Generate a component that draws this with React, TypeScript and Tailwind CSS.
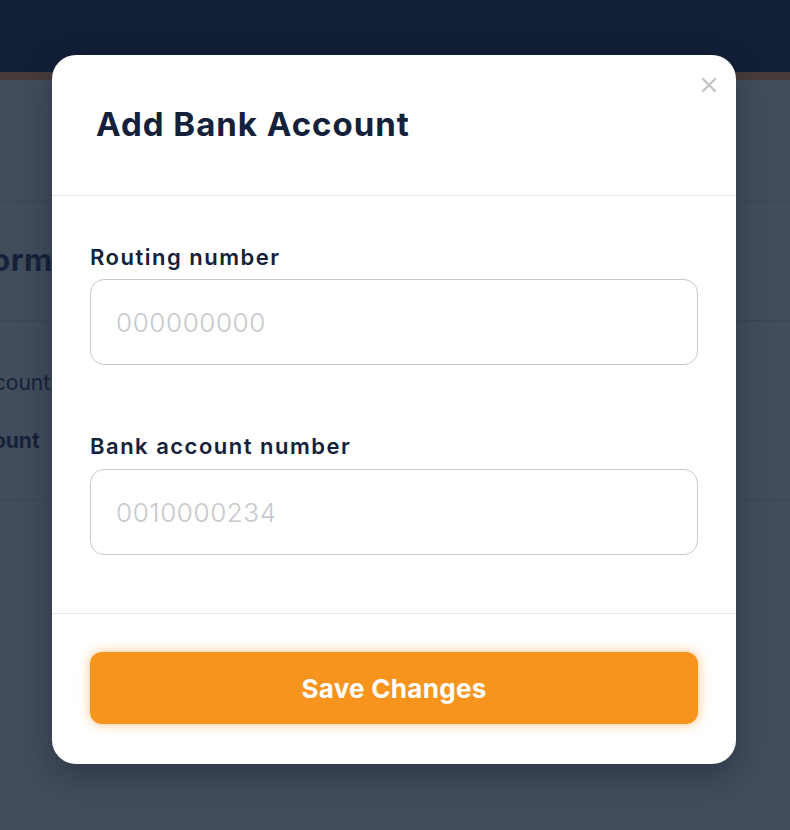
import React from "react";

const font = { fontFamily: "Inter, 'Open Sans', sans-serif" };

export default function App() {
  return (
    <div className="relative w-[790px] h-[830px] overflow-hidden bg-[#424d5c]" style={font}>
      {/* background page (under overlay) */}
      <div className="h-[72px] bg-[#111f37]" />
      <div className="h-[8px] bg-[#483c3b]" />
      <div className="h-[121px] border-b border-[#3d4755]" />
      <div className="h-[120px] border-b border-[#3c4654] flex items-center">
        <div className="-ml-[50px] text-[31px] font-bold text-[#15223a] whitespace-nowrap tracking-[0.5px]">Information</div>
      </div>
      <div className="h-[180px] border-b border-[#3c4654] flex flex-col pt-[46px] gap-[26px]">
        <div className="-ml-[30px] text-[21px] text-[#15223a] whitespace-nowrap">account</div>
        <div className="-ml-[47px] text-[21px] font-bold text-[#15223a] whitespace-nowrap">Account</div>
      </div>

      {/* modal */}
      <div className="absolute left-[52px] top-[55px] w-[684px] bg-white rounded-[24px] shadow-[0_12px_32px_rgba(10,18,32,0.35)]">
        <button className="absolute right-[17px] top-[20px] w-[20px] h-[20px] flex items-center justify-center">
          <svg width="16" height="16" viewBox="0 0 16 16" fill="none" stroke="#c4c4c4" strokeWidth="2.4" strokeLinecap="round">
            <path d="M2 2 L14 14 M14 2 L2 14" />
          </svg>
        </button>
        <div className="h-[141px] flex items-center pl-[44px] border-b border-[#e5e7eb]">
          <h2 className="text-[33px] font-bold text-[#13213a] tracking-[1px]">Add Bank Account</h2>
        </div>
        <div className="px-[38px] pt-[47px] pb-[58px]">
          <label className="block text-[22px] leading-[28px] font-semibold text-[#13213a] tracking-[1.5px]">Routing number</label>
          <div className="mt-[8px] h-[86px] rounded-[14px] border border-[#c9c9c9] flex items-center px-[25px]">
            <span className="text-[26px] text-[#c5c8cd] font-light tracking-[0.6px]">000000000</span>
          </div>
          <label className="block mt-[67px] text-[22px] leading-[28px] font-semibold text-[#13213a] tracking-[1.5px]">Bank account number</label>
          <div className="mt-[9px] h-[86px] rounded-[14px] border border-[#c9c9c9] flex items-center px-[25px]">
            <span className="text-[26px] text-[#c5c8cd] font-light tracking-[0.6px]">0010000234</span>
          </div>
        </div>
        <div className="border-t border-[#e5e7eb] px-[38px] pt-[38px] pb-[40px]">
          <button className="w-full h-[72px] rounded-[12px] bg-[#f7941d] text-white text-[26px] font-bold tracking-[0.3px] shadow-[0_0_12px_rgba(247,148,29,0.55)]">
            Save Changes
          </button>
        </div>
      </div>
    </div>
  );
}
